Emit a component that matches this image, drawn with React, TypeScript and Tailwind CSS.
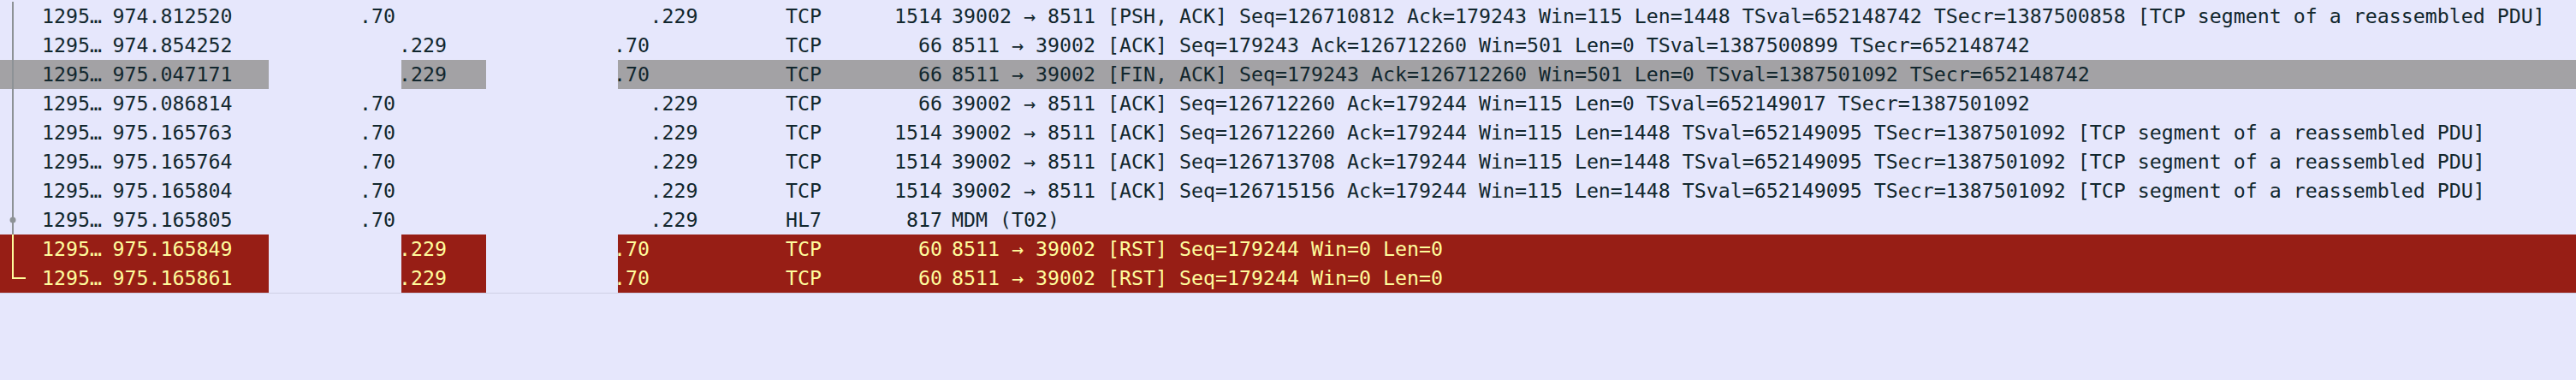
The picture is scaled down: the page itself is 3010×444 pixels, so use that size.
import React from "react";

type Tone = "plain" | "selected" | "reset";
type Marker = "line" | "dot" | "end";

type Packet = {
  no: string;
  time: string;
  fromLow: boolean; // true: source ends .70, dest .229
  proto: string;
  len: string;
  info: string;
  tone: Tone;
  marker: Marker;
};

const packets: Packet[] = [
  { no: "1295…", time: "974.812520", fromLow: true, proto: "TCP", len: "1514", info: "39002 → 8511 [PSH, ACK] Seq=126710812 Ack=179243 Win=115 Len=1448 TSval=652148742 TSecr=1387500858 [TCP segment of a reassembled PDU]", tone: "plain", marker: "line" },
  { no: "1295…", time: "974.854252", fromLow: false, proto: "TCP", len: "66", info: "8511 → 39002 [ACK] Seq=179243 Ack=126712260 Win=501 Len=0 TSval=1387500899 TSecr=652148742", tone: "plain", marker: "line" },
  { no: "1295…", time: "975.047171", fromLow: false, proto: "TCP", len: "66", info: "8511 → 39002 [FIN, ACK] Seq=179243 Ack=126712260 Win=501 Len=0 TSval=1387501092 TSecr=652148742", tone: "selected", marker: "line" },
  { no: "1295…", time: "975.086814", fromLow: true, proto: "TCP", len: "66", info: "39002 → 8511 [ACK] Seq=126712260 Ack=179244 Win=115 Len=0 TSval=652149017 TSecr=1387501092", tone: "plain", marker: "line" },
  { no: "1295…", time: "975.165763", fromLow: true, proto: "TCP", len: "1514", info: "39002 → 8511 [ACK] Seq=126712260 Ack=179244 Win=115 Len=1448 TSval=652149095 TSecr=1387501092 [TCP segment of a reassembled PDU]", tone: "plain", marker: "line" },
  { no: "1295…", time: "975.165764", fromLow: true, proto: "TCP", len: "1514", info: "39002 → 8511 [ACK] Seq=126713708 Ack=179244 Win=115 Len=1448 TSval=652149095 TSecr=1387501092 [TCP segment of a reassembled PDU]", tone: "plain", marker: "line" },
  { no: "1295…", time: "975.165804", fromLow: true, proto: "TCP", len: "1514", info: "39002 → 8511 [ACK] Seq=126715156 Ack=179244 Win=115 Len=1448 TSval=652149095 TSecr=1387501092 [TCP segment of a reassembled PDU]", tone: "plain", marker: "line" },
  { no: "1295…", time: "975.165805", fromLow: true, proto: "HL7", len: "817", info: "MDM (T02)", tone: "plain", marker: "dot" },
  { no: "1295…", time: "975.165849", fromLow: false, proto: "TCP", len: "60", info: "8511 → 39002 [RST] Seq=179244 Win=0 Len=0", tone: "reset", marker: "line" },
  { no: "1295…", time: "975.165861", fromLow: false, proto: "TCP", len: "60", info: "8511 → 39002 [RST] Seq=179244 Win=0 Len=0", tone: "reset", marker: "end" },
];

const toneBg: Record<Tone, string> = {
  plain: "bg-[#e6e7fc]",
  selected: "bg-[#a3a2a5]",
  reset: "bg-[#971e15]",
};

const toneText: Record<Tone, string> = {
  plain: "text-[#12272e]",
  selected: "text-[#12272e]",
  reset: "text-[#fffc9c]",
};

function RelatedMarker({ marker, tone }: { marker: Marker; tone: Tone }) {
  const color = tone === "reset" ? "#fffc9c" : "#8d9296";
  return (
    <svg className="absolute left-0 top-0" width="40" height="34" viewBox="0 0 40 34">
      {marker === "end" ? (
        <path d="M15 0 V17 H30" fill="none" stroke={color} strokeWidth="2" />
      ) : (
        <line x1="15" y1="0" x2="15" y2="34" stroke={color} strokeWidth="2" />
      )}
      {marker === "dot" && <circle cx="15" cy="17" r="3.5" fill={color} />}
    </svg>
  );
}

function PacketRow({ p }: { p: Packet }) {
  const bg = toneBg[p.tone];
  const fg = toneText[p.tone];
  return (
    <div className={`flex h-[34px] items-center whitespace-pre ${fg}`}>
      {/* No. + Time */}
      <div className={`relative flex h-full w-[314px] shrink-0 items-center ${bg}`}>
        <RelatedMarker marker={p.marker} tone={p.tone} />
        <span className="ml-[49px] w-[82.5px]">{p.no}</span>
        <span>{p.time}</span>
      </div>
      {/* masked source prefix */}
      <div className="flex h-full w-[155px] shrink-0 items-center text-[#12272e]">
        {p.fromLow && <span className="ml-[106px]">.70</span>}
      </div>
      <div className={`flex h-full w-[99px] shrink-0 items-center ${bg}`}>
        {!p.fromLow && <span className="ml-[-3px]">.229</span>}
      </div>
      {/* masked destination prefix */}
      <div className="h-full w-[154px] shrink-0" />
      <div className={`flex h-full flex-1 items-center ${bg}`}>
        <span className="w-[196px]">
          {p.fromLow ? <span className="ml-[37.5px]">.229</span> : <span className="ml-[-5px]">.70</span>}
        </span>
        <span className="w-[100px]">{p.proto}</span>
        <span className="w-[83px] text-right">{p.len}</span>
        <span className="ml-[11px]">{p.info}</span>
      </div>
    </div>
  );
}

export default function App() {
  return (
    <div className="h-[444px] w-[3010px] overflow-hidden bg-[#e6e7fc] pt-[2px] font-['DejaVu_Sans_Mono',monospace] text-[23.25px] leading-none">
      {packets.map((p, i) => (
        <PacketRow key={i} p={p} />
      ))}
      <div className="h-px w-full bg-[#cfd0e6]" />
    </div>
  );
}
